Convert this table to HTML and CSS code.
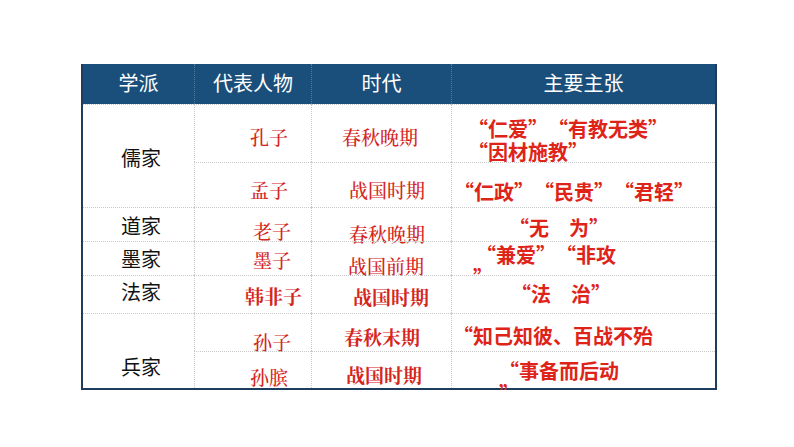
FILE: index.html
```html
<!DOCTYPE html>
<html lang="zh-CN">
<head>
<meta charset="utf-8">
<link rel="stylesheet" href="styles.css">
</head>
<body>
<div class="table">
  <div class="th c1">学派</div>
  <div class="th c2">代表人物</div>
  <div class="th c3">时代</div>
  <div class="th c4">主要主张</div>

  <div class="td school ru">儒家</div>
  <div class="td name n-kong">孔子</div>
  <div class="td era e-1">春秋晚期</div>
  <div class="td idea i-1">“仁爱”“有教无类”<br>“因材施教”</div>

  <div class="td name n-meng">孟子</div>
  <div class="td era e-2">战国时期</div>
  <div class="td idea i-2">“仁政”“民贵”“君轻”</div>

  <div class="td school dao">道家</div>
  <div class="td name n-lao">老子</div>
  <div class="td era e-3">春秋晚期</div>
  <div class="td idea i-3">“无　为”</div>

  <div class="td school mo">墨家</div>
  <div class="td name n-mo">墨子</div>
  <div class="td era e-4">战国前期</div>
  <div class="td idea i-4">“兼爱”“非攻<br><span class="hang">”</span></div>

  <div class="td school fa">法家</div>
  <div class="td name n-han bold">韩非子</div>
  <div class="td era e-5 bold">战国时期</div>
  <div class="td idea i-5">“法　治”</div>

  <div class="td school bing">兵家</div>
  <div class="td name n-sun">孙子</div>
  <div class="td era e-6 bold">春秋末期</div>
  <div class="td idea i-6">“知己知彼、百战不殆</div>

  <div class="td name n-bin">孙膑</div>
  <div class="td era e-7 bold">战国时期</div>
  <div class="td idea i-7">“事备而后动<br><span class="hang2">”</span></div>
</div>
</body>
</html>
```

FILE: styles.css
```css
html, body {
  margin: 0;
  padding: 0;
  background: #ffffff;
}

.table {
  margin: 64px 0 0 81px;
  width: 636px;
  box-sizing: border-box;
  display: grid;
  grid-template-columns: 111px 117px 140px 264px;
  grid-template-rows: 40px 58px 45px 34px 34px 38px 38px 37px;
  border-left: 2px solid #1d3d5e;
  border-right: 2px solid #1d3d5e;
  border-bottom: 2px solid #1d3d5e;
  font-family: "Noto Sans CJK SC", sans-serif;
}

.th {
  background: #1b4f7b;
  color: #ffffff;
  font-size: 20px;
  line-height: 24px;
  padding-top: 7px;
  text-align: center;
  box-sizing: border-box;
}
.th.c2, .th.c3, .th.c4 {
  border-left: 1px dotted rgba(255, 255, 255, 0.25);
}

.td {
  box-sizing: border-box;
  border-top: 1px dotted #c9c9c9;
  white-space: nowrap;
  overflow: visible;
}

.school {
  grid-column: 1;
  color: #111111;
  font-size: 20px;
  line-height: 24px;
  text-align: center;
  padding-left: 5px;
}

.name, .era {
  color: #d4261c;
  font-family: "Noto Serif CJK SC", "Noto Sans CJK SC", serif;
  font-weight: 500;
  font-size: 19px;
  line-height: 22px;
  border-left: 1px dotted #c9c9c9;
}
.name { grid-column: 2; }
.era { grid-column: 3; }
.name.bold, .era.bold { font-weight: bold; }

.idea {
  grid-column: 4;
  color: #de2418;
  font-weight: bold;
  font-size: 20px;
  line-height: 23px;
  border-left: 1px dotted #c9c9c9;
  text-spacing-trim: space-all;
}

.ru { grid-row: 2 / 4; padding-top: 41px; }
.dao { grid-row: 4; padding-top: 6px; }
.mo { grid-row: 5; padding-top: 5px; }
.fa { grid-row: 6; padding-top: 4px; }
.bing { grid-row: 7 / 9; padding-top: 41px; }

.n-kong { grid-row: 2; padding: 21px 0 0 55px; }
.n-meng { grid-row: 3; padding: 16px 0 0 55px; }
.n-lao { grid-row: 4; padding: 12px 0 0 58px; }
.n-mo { grid-row: 5; padding: 7px 0 0 58px; }
.n-han { grid-row: 6; padding: 9px 0 0 50px; }
.n-sun { grid-row: 7; padding: 17px 0 0 58px; }
.n-bin { grid-row: 8; padding: 14px 0 0 55px; }

.e-1 { grid-row: 2; padding: 21px 0 0 30px; }
.e-2 { grid-row: 3; padding: 16px 0 0 37px; }
.e-3 { grid-row: 4; padding: 15px 0 0 37px; }
.e-4 { grid-row: 5; padding: 13px 0 0 36px; }
.e-5 { grid-row: 6; padding: 10px 0 0 41px; }
.e-6 { grid-row: 7; padding: 12px 0 0 32px; }
.e-7 { grid-row: 8; padding: 12px 0 0 34px; }

.i-1 { grid-row: 2; padding: 12px 0 0 16px; }
.i-2 { grid-row: 3; padding: 17px 0 0 2px; }
.i-3 { grid-row: 4; padding: 8px 0 0 57px; }
.i-4 { grid-row: 5; padding: 1px 0 0 24px; }
.i-5 { grid-row: 6; padding: 6px 0 0 59px; }
.i-6 { grid-row: 7; padding: 10px 0 0 1px; }
.i-7 { grid-row: 8; padding: 7px 0 0 47px; }

.hang { margin-left: -3px; }
.hang2 { margin-left: 0; }
```
